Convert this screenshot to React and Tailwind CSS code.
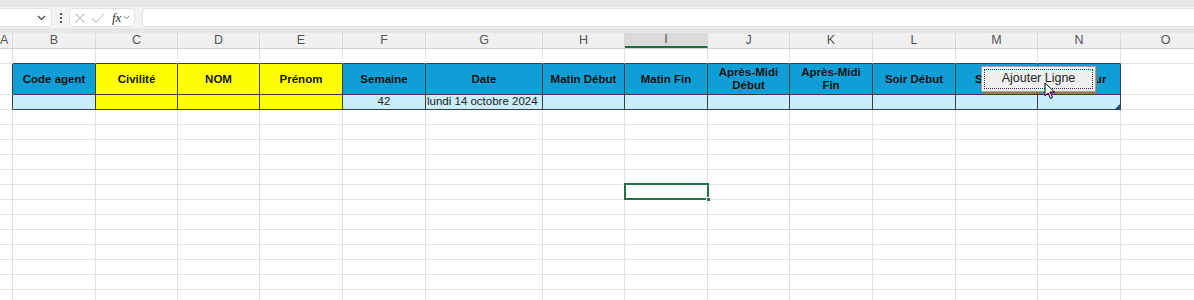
import React from "react";

// column widths, A is scrolled off and only a sliver shows
const COLS = [
  { id: "A", w: 13 },
  { id: "B", w: 83 },
  { id: "C", w: 82 },
  { id: "D", w: 82 },
  { id: "E", w: 83 },
  { id: "F", w: 83 },
  { id: "G", w: 117 },
  { id: "H", w: 82 },
  { id: "I", w: 83 },
  { id: "J", w: 82 },
  { id: "K", w: 83 },
  { id: "L", w: 83 },
  { id: "M", w: 82 },
  { id: "N", w: 83 },
  { id: "O", w: 90 },
];

const HEADERS = [
  { t: "Code agent", c: "blue" },
  { t: "Civilité", c: "yellow" },
  { t: "NOM", c: "yellow" },
  { t: "Prénom", c: "yellow" },
  { t: "Semaine", c: "blue" },
  { t: "Date", c: "blue" },
  { t: "Matin Début", c: "blue" },
  { t: "Matin Fin", c: "blue" },
  { t: "Après-Midi Début", c: "blue" },
  { t: "Après-Midi Fin", c: "blue" },
  { t: "Soir Début", c: "blue" },
  { t: "Soir Fin", c: "blue" },
  { t: "Total Jour", c: "blue" },
];

const DATA = ["", "", "", "", "42", "lundi 14 octobre 2024", "", "", "", "", "", "", ""];

const Cell = ({ w, className = "", children }) => (
  <div
    className={`shrink-0 border-r border-b box-border flex items-center overflow-hidden ${className}`}
    style={{ width: w }}
  >
    {children}
  </div>
);

const EmptyRow = ({ dark = false }) => (
  <div className="flex h-[15px]">
    {COLS.map((c, i) => (
      <Cell
        key={c.id}
        w={c.w}
        className={`border-[#e1e1e1] ${dark && i > 0 && i < 14 ? "!border-b-[#3f3f3f]" : ""}`}
      />
    ))}
  </div>
);

const Cursor = () => (
  <svg width="12" height="18" viewBox="0 0 12 18" className="absolute left-[1044px] top-[82px]">
    <path d="M1 1 L1 14 L4 11 L6.5 16.5 L8.5 15.5 L6 10 L10.5 10 Z" fill="#fff" stroke="#000" strokeWidth="1" strokeLinejoin="round" />
  </svg>
);

export default function App() {
  return (
    <div className="relative w-[1194px] h-[300px] overflow-hidden bg-white font-['Liberation_Sans',Arial,sans-serif]">
      {/* top strip */}
      <div className="h-[7px] bg-[#e8e8e8]" />

      {/* formula bar */}
      <div className="h-[21px] bg-[#f3f3f3] flex items-center">
        <div className="w-[52px] h-[19px] bg-white rounded-r-[4px] border border-l-0 border-[#e2e2e2] flex items-center justify-end pr-[5px]">
          <svg width="9" height="6" viewBox="0 0 9 6"><path d="M1 1 L4.5 4.5 L8 1" fill="none" stroke="#444" strokeWidth="1.2" /></svg>
        </div>
        <div className="w-[17px] flex flex-col items-center gap-[2px]">
          <span className="w-[2px] h-[2px] bg-[#555]" />
          <span className="w-[2px] h-[2px] bg-[#555]" />
          <span className="w-[2px] h-[2px] bg-[#555]" />
        </div>
        <div className="w-[66px] h-[19px] bg-white rounded-[4px] border border-[#e2e2e2] flex items-center pl-[4px] gap-[5px]">
          <svg width="12" height="12" viewBox="0 0 12 12"><path d="M1.5 1.5 L10.5 10.5 M10.5 1.5 L1.5 10.5" stroke="#c4c4c4" strokeWidth="1.1" /></svg>
          <svg width="14" height="12" viewBox="0 0 14 12"><path d="M1 6.5 L5 10.5 L13 1.5" fill="none" stroke="#c4c4c4" strokeWidth="1.1" /></svg>
          <span className="font-['Liberation_Serif',serif] italic text-[13px] leading-none text-[#333] ml-[2px]">fx</span>
          <svg width="7" height="5" viewBox="0 0 7 5" className="-ml-[3px]"><path d="M0.8 0.8 L3.5 3.8 L6.2 0.8" fill="none" stroke="#888" strokeWidth="1" /></svg>
        </div>
        <div className="ml-[7px] flex-1 h-[19px] bg-white rounded-l-[4px] border border-r-0 border-[#e2e2e2]" />
      </div>

      <div className="h-[5px] bg-[#e6e6e6]" />

      {/* column headers */}
      <div className="flex h-[15px] bg-[#f0f0f0] border-b border-[#cfcfcf] box-content">
        {COLS.map((c, i) => (
          <div
            key={c.id}
            className={`shrink-0 h-[15px] flex items-center text-[12.5px] leading-none text-[#555] border-r border-[#d6d6d6] ${
              c.id === "I" ? "bg-[#dadada] border-b-2 border-b-[#1e7145] text-[#1e7145] justify-center" : i === 0 ? "justify-start" : "justify-center"
            }`}
            style={{ width: c.w }}
          >
            {c.id}
          </div>
        ))}
      </div>

      {/* row 1 */}
      <EmptyRow dark />

      {/* table header row */}
      <div className="flex h-[31px]">
        {COLS.map((c, i) => {
          if (i === 0) return <Cell key={c.id} w={c.w} className="border-b-[#e1e1e1] border-r-[#3f3f3f]" />;
          if (i === 14) return <Cell key={c.id} w={c.w} className="border-[#e1e1e1]" />;
          const h = HEADERS[i - 1];
          return (
            <Cell
              key={c.id}
              w={c.w}
              className={`justify-center text-center text-[11.5px] leading-[13px] font-bold text-[#111] border-[#3f3f3f] px-[4px] ${
                h.c === "yellow" ? "bg-[#ffff00]" : "bg-[#0f9ed5]"
              }`}
            >
              {h.t}
            </Cell>
          );
        })}
      </div>

      {/* table data row */}
      <div className="flex h-[15px]">
        {COLS.map((c, i) => {
          if (i === 0) return <Cell key={c.id} w={c.w} className="border-b-[#e1e1e1] border-r-[#3f3f3f]" />;
          if (i === 14) return <Cell key={c.id} w={c.w} className="border-[#e1e1e1]" />;
          const h = HEADERS[i - 1];
          const v = DATA[i - 1];
          return (
            <Cell
              key={c.id}
              w={c.w}
              className={`relative text-[11.5px] leading-none text-[#222] border-[#3f3f3f] ${
                v === "42" ? "justify-center" : "justify-start pl-[1px]"
              } ${h.c === "yellow" ? "bg-[#ffff00]" : "bg-[#caedfb]"}`}
            >
              {v}
              {i === 13 && (
                <span className="absolute right-0 bottom-0 w-0 h-0 border-l-[5px] border-l-transparent border-b-[5px] border-b-[#1f4e9a]" />
              )}
            </Cell>
          );
        })}
      </div>

      {/* empty rows */}
      {Array.from({ length: 13 }).map((_, r) => (
        <EmptyRow key={r} />
      ))}

      {/* selected cell I9 */}
      <div className="absolute left-[624px] top-[183px] w-[85px] h-[17px] border-2 border-[#217346]">
        <span className="absolute -right-[4px] -bottom-[4px] w-[5px] h-[5px] bg-[#217346] border border-white" />
      </div>

      {/* form button over the sheet */}
      <div className="absolute left-[981px] top-[66px] w-[115px] h-[26px] bg-[#f0f0f0] border border-[#a0a0a0] shadow-[1px_1px_0_#7a7a7a] p-[2px]">
        <div className="w-full h-full border border-dotted border-[#333] flex items-center justify-center text-[12.5px] text-[#222] pb-[1px]">
          Ajouter Ligne
        </div>
      </div>
      <Cursor />
    </div>
  );
}
